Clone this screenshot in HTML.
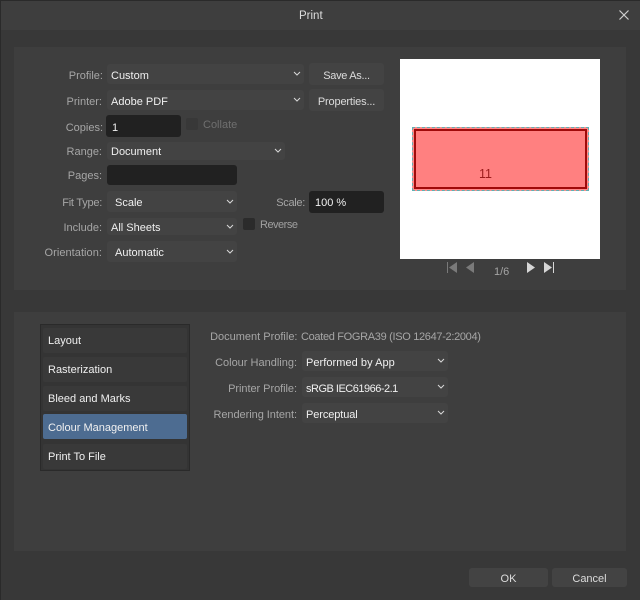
<!DOCTYPE html>
<html>
<head>
<meta charset="utf-8">
<style>
html,body{margin:0;padding:0;}
body{width:640px;height:600px;overflow:hidden;background:#383838;font-family:"Liberation Sans",sans-serif;font-size:11px;position:relative;}
div{position:absolute;box-sizing:border-box;}
.t{white-space:nowrap;line-height:14px;height:14px;margin-top:1px;}
.l{color:#a6a6a6;text-align:right;}
.v{color:#f0f0f0;}
.dd{background:#434343;border-radius:3px;}
.in{background:#212121;border-radius:3px;}
.btn{background:#434343;border-radius:3px;color:#dcdcdc;text-align:center;margin-top:0;}
.cb{background:#2b2b2b;border-radius:2px;width:12px;height:12px;}
.item{left:43px;width:144px;height:25px;background:#393939;border-radius:2px;color:#f0f0f0;padding-left:5px;line-height:27px;white-space:nowrap;}
svg{position:absolute;overflow:visible;}
</style>
</head>
<body>
<div style="left:0;top:0;width:640px;height:30px;background:#3e3e3e"></div>
<div style="left:0;top:0;width:640px;height:1px;background:#2a2a2a"></div>
<div style="left:0;top:0;width:1px;height:600px;background:#2a2a2a"></div>
<div class="t" style="left:299px;top:8px;color:#dedede;font-size:11.5px">Print</div>
<svg style="left:619px;top:10px" width="10" height="10"><path d="M.5.5l9 9M9.500.5l-9 9" stroke="#d0d0d0" stroke-width="1.200" fill="none"/></svg>

<div style="left:14px;top:47px;width:612px;height:243px;background:#3e3e3e"></div>
<div style="left:14px;top:312px;width:612px;height:239px;background:#3e3e3e"></div>

<!-- Top form -->
<div class="t l" style="left:20px;width:83px;top:68px">Profile:</div>
<div class="dd" style="left:107px;top:64px;width:197px;height:20px"></div>
<div class="t v" style="left:111px;top:68px">Custom</div>
<svg style="left:293px;top:71px" width="8" height="5"><path d="M1 1l3 3 3-3" stroke="#d8d8d8" fill="none"/></svg>

<div class="t l" style="left:20px;width:82px;top:94px">Printer:</div>
<div class="dd" style="left:107px;top:90px;width:197px;height:20px"></div>
<div class="t v" style="left:111px;top:94px">Adobe PDF</div>
<svg style="left:293px;top:97px" width="8" height="5"><path d="M1 1l3 3 3-3" stroke="#d8d8d8" fill="none"/></svg>

<div class="t l" style="left:20px;width:83px;top:120px">Copies:</div>
<div class="in" style="left:106px;top:115px;width:75px;height:22px"></div>
<div class="t v" style="left:112px;top:120px">1</div>
<div class="cb" style="left:186px;top:118px;background:#383838"></div>
<div class="t" style="left:203px;top:117px;color:#6f6f6f">Collate</div>

<div class="t l" style="left:20px;width:82px;top:144px">Range:</div>
<div class="dd" style="left:107px;top:142px;width:178px;height:18px"></div>
<div class="t v" style="left:111px;top:144px">Document</div>
<svg style="left:274px;top:148px" width="8" height="5"><path d="M1 1l3 3 3-3" stroke="#d8d8d8" fill="none"/></svg>

<div class="t l" style="left:20px;width:82px;top:168px">Pages:</div>
<div class="in" style="left:107px;top:165px;width:130px;height:20px"></div>

<div class="t l" style="left:20px;width:82px;top:195px;letter-spacing:-.25px">Fit Type:</div>
<div class="dd" style="left:107px;top:191px;width:130px;height:21px"></div>
<div class="t v" style="left:115px;top:195px">Scale</div>
<svg style="left:226px;top:199px" width="8" height="5"><path d="M1 1l3 3 3-3" stroke="#d8d8d8" fill="none"/></svg>

<div class="t l" style="left:20px;width:82px;top:220px">Include:</div>
<div class="dd" style="left:107px;top:218px;width:130px;height:17px"></div>
<div class="t v" style="left:111px;top:220px">All Sheets</div>
<svg style="left:226px;top:224px" width="8" height="5"><path d="M1 1l3 3 3-3" stroke="#d8d8d8" fill="none"/></svg>

<div class="t l" style="left:20px;width:82px;top:245px;letter-spacing:.05px">Orientation:</div>
<div class="dd" style="left:107px;top:241px;width:130px;height:21px"></div>
<div class="t v" style="left:115px;top:245px">Automatic</div>
<svg style="left:226px;top:249px" width="8" height="5"><path d="M1 1l3 3 3-3" stroke="#d8d8d8" fill="none"/></svg>

<div class="cb" style="left:243px;top:218px"></div>
<div class="t" style="left:260px;top:217px;color:#a0a0a0;letter-spacing:-.5px">Reverse</div>
<div class="t l" style="left:250px;width:55px;top:195px;letter-spacing:-.3px">Scale:</div>
<div class="in" style="left:309px;top:191px;width:75px;height:22px"></div>
<div class="t v" style="left:315px;top:195px">100 %</div>

<div class="btn t" style="left:309px;top:63px;width:75px;height:22px;line-height:26px;letter-spacing:-.3px">Save As...</div>
<div class="btn t" style="left:309px;top:89px;width:75px;height:22px;line-height:26px;letter-spacing:-.15px">Properties...</div>

<!-- Preview -->
<div style="left:400px;top:59px;width:200px;height:200px;background:#fff"></div>
<div style="left:412px;top:127px;width:177px;height:64px;border:1px dashed #5fb0b3;background:#ff8a8a"></div>
<div style="left:414px;top:129px;width:173px;height:60px;background:#ff8080;border:2px solid #a00a0a"></div>
<div class="t" style="left:479px;top:166px;color:#9c1c1c;font-size:12.500px">11</div>

<svg style="left:447px;top:262px" width="110" height="12">
<path d="M0 0h1v11H0z" fill="#7a7a7a"/><path d="M10 0v11L2 5.500z" fill="#7a7a7a"/>
<path d="M27 0v11l-8-5.500z" fill="#7a7a7a"/>
<path d="M80 0v11l8-5.500z" fill="#d6d6d6"/>
<path d="M97 0v11l8-5.500z" fill="#d6d6d6"/><path d="M106 0h1v11h-1z" fill="#d6d6d6"/>
</svg>
<div class="t" style="left:494px;top:264px;color:#a4a4a4">1/6</div>

<!-- Sidebar -->
<div style="left:40px;top:324px;width:150px;height:147px;background:#343434;border:1px solid #2a2a2a"></div>
<div class="item" style="top:328px">Layout</div>
<div class="item" style="top:357px">Rasterization</div>
<div class="item" style="top:386px">Bleed and Marks</div>
<div class="item" style="top:414px;background:#4d6c91;line-height:28px">Colour Management</div>
<div class="item" style="top:444px">Print To File</div>

<!-- Colour -->
<div class="t l" style="left:200px;width:97.500px;top:329px">Document Profile:</div>
<div class="t" style="left:301px;top:329px;color:#a6a6a6;letter-spacing:-.32px">Coated FOGRA39 (ISO 12647-2:2004)</div>
<div class="t l" style="left:200px;width:97px;top:355px">Colour Handling:</div>
<div class="dd" style="left:302px;top:351px;width:146px;height:20px"></div>
<div class="t v" style="left:306px;top:355px;letter-spacing:.05px">Performed by App</div>
<svg style="left:437px;top:358px" width="8" height="5"><path d="M1 1l3 3 3-3" stroke="#d8d8d8" fill="none"/></svg>
<div class="t l" style="left:200px;width:97px;top:381px;letter-spacing:-.05px">Printer Profile:</div>
<div class="dd" style="left:302px;top:377px;width:146px;height:20px"></div>
<div class="t v" style="left:306px;top:381px;letter-spacing:-.5px">sRGB IEC61966-2.1</div>
<svg style="left:437px;top:384px" width="8" height="5"><path d="M1 1l3 3 3-3" stroke="#d8d8d8" fill="none"/></svg>
<div class="t l" style="left:200px;width:97px;top:407px;letter-spacing:-.05px">Rendering Intent:</div>
<div class="dd" style="left:302px;top:403px;width:146px;height:20px"></div>
<div class="t v" style="left:306px;top:407px;letter-spacing:-.1px">Perceptual</div>
<svg style="left:437px;top:410px" width="8" height="5"><path d="M1 1l3 3 3-3" stroke="#d8d8d8" fill="none"/></svg>

<div class="btn t" style="left:469px;top:568px;width:79px;height:19px;line-height:22px">OK</div>
<div class="btn t" style="left:552px;top:568px;width:75px;height:19px;line-height:22px">Cancel</div>
</body>
</html>
